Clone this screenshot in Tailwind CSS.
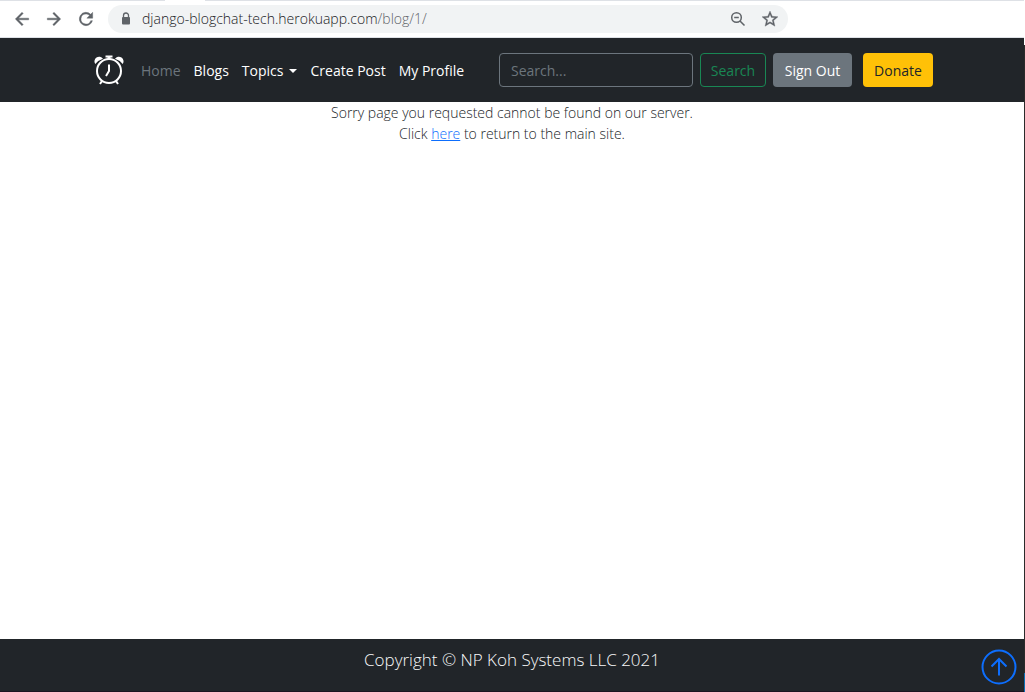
<!DOCTYPE html>
<html lang="en">
<head>
<meta charset="utf-8">
<meta name="viewport" content="width=device-width, initial-scale=1">
<title>Page not found</title>
<script src="https://cdn.jsdelivr.net/npm/@tailwindcss/browser@4"></script>
</head>
<body class="flex min-h-screen bg-white font-['Segoe_UI','Open_Sans',sans-serif] text-sm text-[#212529]">
<div class="flex min-w-0 flex-1 flex-col">
  <!-- Browser toolbar -->
  <div class="flex h-[38px] shrink-0 flex-col border-b border-[#dee1e6]">
    <div class="flex h-px shrink-0 bg-[#dee1e6] pl-[165px]"><span class="w-10 bg-white"></span></div>
    <div class="flex flex-1 items-center pl-3">
      <div class="flex gap-3 text-[#5f6368]">
        <button type="button" aria-label="Back" class="size-5"><svg viewBox="0 0 24 24" fill="currentColor" stroke="currentColor" stroke-width=".5"><path d="M20 11H7.800l5.600-5.600L12 4l-8 8 8 8 1.400-1.400L7.800 13H20z"/></svg></button>
        <button type="button" aria-label="Forward" class="size-5"><svg viewBox="0 0 24 24" fill="currentColor" stroke="currentColor" stroke-width=".5"><path d="M4 13h12.200l-5.600 5.600L12 20l8-8-8-8-1.400 1.400 5.600 5.600H4z"/></svg></button>
        <button type="button" aria-label="Reload" class="size-5"><svg viewBox="0 0 24 24" fill="currentColor" stroke="currentColor" stroke-width=".5"><path d="M17.650 6.350A8 8 0 1 0 19.730 14h-2.080A6 6 0 1 1 12 6c1.660 0 3.140.690 4.220 1.780L13 11h7V4z"/></svg></button>
      </div>
      <div class="ml-3 flex h-7 w-[680px] items-center rounded-full bg-[#f1f3f4] px-[10px] text-[#5f6368]">
        <svg class="size-4" viewBox="0 0 16 16"><path d="M5.500 7V4.500a2.500 2.500 0 0 1 5 0V7" fill="none" stroke="currentColor" stroke-width="1.300"/><rect x="4" y="6" width="8" height="7.500" rx="1" fill="currentColor"/></svg>
        <div class="flex-1 pl-2 font-light"><span class="text-[#202124]">django-blogchat-tech.herokuapp.com</span>/blog/1/</div>
        <button type="button" aria-label="Zoom" class="size-4"><svg viewBox="0 0 16 16" fill="none" stroke="currentColor" stroke-width="1.500"><circle cx="6.500" cy="6.500" r="4.800"/><path d="M4.200 6.500h4.600M10 10l4.500 4.500"/></svg></button>
        <button type="button" aria-label="Bookmark" class="ml-4 size-4"><svg viewBox="2 2 20 20" fill="currentColor" stroke="currentColor" stroke-width=".4"><path d="M22 9.240l-7.190-.620L12 2 9.190 8.630 2 9.240l5.460 4.730L5.820 21 12 17.270 18.180 21l-1.630-7.030zM12 15.400l-3.760 2.270 1-4.280-3.320-2.880 4.380-.380L12 6.100l1.710 4.040 4.380.380-3.320 2.880 1 4.280z"/></svg></button>
      </div>
    </div>
  </div>

  <header class="bg-[#212529]">
    <nav class="mx-auto flex h-16 max-w-[840px] items-center pl-px">
      <a href="#" aria-label="Home page" class="mr-4 size-8 shrink-0 text-white">
        <svg viewBox="0 0 32 32" fill="none" stroke="currentColor"><circle cx="16" cy="17" r="12" stroke-width="2"/><path d="M16 10.500V17l-3 5" stroke-width="2"/><path d="M9 27l-2 3M23 27l2 3" stroke-width="2"/><path fill="currentColor" stroke="none" d="M12.500 1.500h7v2h-2v2h-3v-2h-2zM2.300 10A4.400 4.400 0 1 1 10 4.700 15 15 0 0 0 2.300 10zM29.700 10A4.400 4.400 0 1 0 22 4.700a15 15 0 0 1 7.700 5.300z"/></svg>
      </a>
      <div class="flex items-center gap-[13px] pt-px whitespace-nowrap text-white">
        <a href="#" class="text-[#6c757d]">Home</a>
        <a href="#">Blogs</a>
        <button type="button" class="flex items-center gap-[6px]">Topics <svg class="h-1 w-2" viewBox="0 0 8 4" fill="currentColor"><path d="M0 0h8L4 4z"/></svg></button>
        <a href="#">Create Post</a>
        <a href="#">My Profile</a>
      </div>
      <form class="-mr-px ml-auto flex gap-[7px]">
        <input type="search" aria-label="Search" placeholder="Search..." class="h-[34px] w-[194px] rounded border border-[#6c757d] px-[11px] placeholder:text-[#6c757d]">
        <button type="button" class="h-[34px] w-[66px] rounded border border-[#198754] pt-px text-[#198754]">Search</button>
        <button type="button" class="h-[34px] w-[79px] rounded bg-[#6c757d] pt-px text-white">Sign Out</button>
        <button type="button" class="ml-1 h-[34px] w-[70px] rounded bg-[#ffc107] pt-px">Donate</button>
      </form>
    </nav>
  </header>

  <main class="flex-1 text-center leading-[21px] font-light">
    <p>Sorry page you requested cannot be found on our server.</p>
    <p>Click <a href="#" class="text-[#0d6efd] underline">here</a> to return to the main site.</p>
  </main>

  <footer class="relative h-[53px] border-b border-[#1c1520] bg-[#212529] pt-[7px] text-center text-[17px] leading-[27px] font-light text-[#f8f9fa]">
    Copyright © NP Koh Systems LLC 2021
    <a href="#" aria-label="Back to top" class="absolute right-[7px] bottom-[6px] size-9 text-[#0d6efd]">
      <svg viewBox="0 0 36 36" fill="none" stroke="currentColor" stroke-width="2"><circle cx="18" cy="18" r="16.500"/><path d="M18 26.500V10.500M10.500 17.500l7.500-7.500 7.500 7.500"/></svg>
    </a>
  </footer>
</div>
<!-- Window edge -->
<div class="flex w-px flex-col pt-[45px]"><span class="flex-1 bg-[#2b2b2b]"></span><span class="h-[19px] bg-[#0a6fb5]"></span></div>
</body>
</html>
